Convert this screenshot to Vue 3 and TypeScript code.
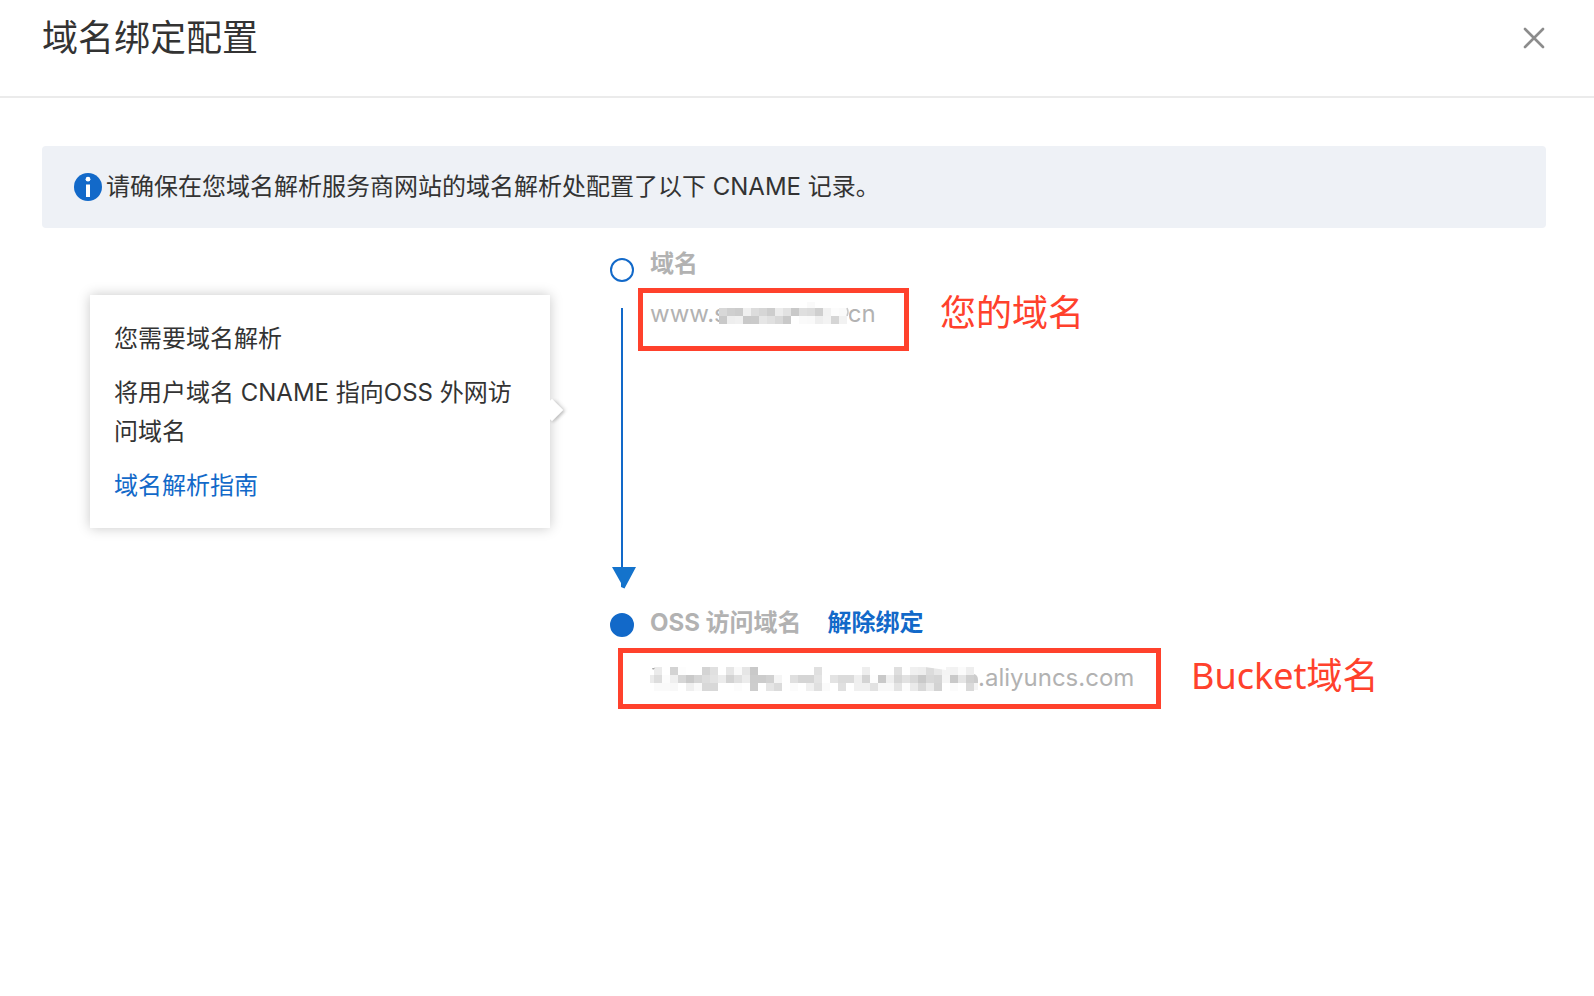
<script setup lang="ts">
interface Cell {
  x: number
  y: number
  fill: string
}

const CELL = 8

// Each row is a list of two-digit hex grey levels, one per mosaic cell.
function toCells(rows: string[]): Cell[] {
  return rows.flatMap((row, r) =>
    row.split(' ').map((grey, c) => ({
      x: c * CELL,
      y: r * CELL,
      fill: `#${grey}${grey}${grey}`,
    })),
  )
}

const userMask = toCells([
  'd8 cf cc f0 dc d6 cd ec e2 c9 df dc cf f2 fc fa',
  'c9 ee f0 c9 ca e6 e0 d8 c9 ff fa f9 ee f3 d5 f2',
])

const bucketMask = toCells([
  'eb ff d3 fd ff ff d4 e0 ff e6 fa e6 c9 ff ff ff ff ff ff ff e0 ff ff ff ff ff ee ff ff ff df ff f0 ee dc e8 f4 f2 fb ee',
  'dd fc ef d6 c9 d5 dd e3 ec d3 e0 ec cc cc d1 f5 ff df d5 d5 e4 ff e3 db db ef d4 fd c9 ef d6 e2 d8 c9 d8 d5 f5 c9 e5 d0',
  'fa fa f8 ff ef f9 d8 d8 ff ff fc ff cd ff e5 db ff fb ff f0 e0 fb ff e0 ff f0 f0 e2 f8 f8 e4 fc ea d8 eb d3 ff fb ff da',
])
</script>

<template>
  <section class="dialog" aria-labelledby="dialog-title">
    <header class="dialog-header">
      <h1 id="dialog-title">域名绑定配置</h1>
      <button type="button" class="close" aria-label="关闭">
        <svg width="24" height="24" viewBox="0 0 24 24" aria-hidden="true">
          <path d="M3 3L21 21M21 3L3 21" fill="none" stroke="#8c8c8c" stroke-width="2.6" stroke-linecap="round" />
        </svg>
      </button>
    </header>

    <main class="dialog-body">
      <div class="notice" role="note">
        <svg width="28" height="28" viewBox="0 0 28 28" aria-hidden="true">
          <circle cx="14" cy="14" r="14" fill="#1269c9" />
          <circle cx="14" cy="6.2" r="2.4" fill="#fff" />
          <rect x="12" y="11.5" width="4" height="12.5" fill="#fff" />
        </svg>
        <span>请确保在您域名解析服务商网站的域名解析处配置了以下 CNAME 记录。</span>
      </div>

      <div class="binding">
        <aside class="guide">
          <p>您需要域名解析</p>
          <p>将用户域名 CNAME 指向OSS 外网访问域名</p>
          <p><a href="#">域名解析指南</a></p>
        </aside>

        <div class="track" aria-hidden="true">
          <span class="node"></span>
          <div class="connector">
            <svg width="24" height="22" viewBox="0 0 24 22">
              <path d="M0 0H24L12.5 21.5L9 20V16Z" fill="#1473cc" />
            </svg>
          </div>
          <span class="node filled"></span>
        </div>

        <div class="steps">
          <section class="step first">
            <h2>域名</h2>
            <div class="row">
              <div class="value user">
                <span>www.s</span>
                <svg class="mask" width="132" height="24" viewBox="0 0 132 24" aria-hidden="true">
                  <rect width="130" height="24" fill="#fff" />
                  <rect x="88" y="0" width="8" height="6" fill="#fafafa" />
                  <g transform="translate(0 6)">
                    <rect v-for="(c, i) in userMask" :key="i" :x="c.x" :y="c.y" width="8" height="8" :fill="c.fill" />
                  </g>
                  <path d="M128 6Q130 10 128 14" fill="none" stroke="#c8c8c8" stroke-width="1.5" />
                </svg>
                <span>cn</span>
              </div>
              <span class="note raised">您的域名</span>
            </div>
          </section>

          <section class="step">
            <div class="heading">
              <h2>OSS 访问域名</h2>
              <button type="button" class="unbind">解除绑定</button>
            </div>
            <div class="row">
              <div class="value bucket">
                <svg class="mask" width="328" height="24" viewBox="0 0 328 24" aria-hidden="true">
                  <rect x="0" y="8" width="4" height="8" fill="#ebebeb" />
                  <g transform="translate(4 0)">
                    <rect v-for="(c, i) in bucketMask" :key="i" :x="c.x" :y="c.y" width="8" height="8" :fill="c.fill" />
                  </g>
                  <path d="M2 1H5L3 3Z" fill="#a8a8a8" />
                  <path d="M275 0L296 3V0Z" fill="#fff" />
                  <path d="M324 7Q328 8 328 13V16H324Z" fill="#cccccc" />
                  <rect x="324" y="16" width="4" height="7" fill="#f4f4f4" />
                </svg>
                <span>.aliyuncs.com</span>
              </div>
              <span class="note">Bucket域名</span>
            </div>
          </section>
        </div>
      </div>
    </main>
  </section>
</template>

<style>
body {
  margin: 0;
  background: #fff;
}
</style>

<style scoped>
.dialog {
  min-height: 100vh;
  background: #fff;
  color: #333;
  font-family: Inter, "Noto Sans CJK SC", sans-serif;
  font-size: 24px;
  line-height: 39px;
}

.dialog-header {
  display: flex;
  align-items: flex-start;
  justify-content: space-between;
  box-sizing: border-box;
  min-height: 98px;
  padding: 12px 48px 0 42px;
  border-bottom: 2px solid #ebebeb;
}

h1 {
  margin: 0;
  font-size: 36px;
  font-weight: 400;
  line-height: 52px;
}

.close {
  display: flex;
  margin: 14px 0 0;
  padding: 0;
  border: 0;
  background: none;
  cursor: pointer;
}

.dialog-body {
  padding: 48px 48px 48px 42px;
}

.notice {
  display: flex;
  align-items: center;
  gap: 4px;
  box-sizing: border-box;
  min-height: 82px;
  padding: 20px 32px;
  border-radius: 4px;
  background: #eef1f6;
}

.notice span {
  padding-bottom: 2px;
}

.binding {
  display: flex;
  align-items: flex-start;
}

.guide {
  position: relative;
  display: flex;
  flex: none;
  flex-direction: column;
  gap: 15px;
  box-sizing: border-box;
  width: 460px;
  margin: 67px 60px 0 48px;
  padding: 24px 24px 23px;
  background: #fff;
  box-shadow: 0 0 12px rgba(0, 0, 0, 0.22);
}

.guide::before {
  content: "";
  position: absolute;
  top: 107px;
  right: -10px;
  width: 16px;
  height: 16px;
  background: #fff;
  box-shadow: 3px -3px 4px -1px rgba(0, 0, 0, 0.1), 2px 0 3px rgba(0, 0, 0, 0.16);
  transform: rotate(45deg);
}

.guide::after {
  content: "";
  position: absolute;
  inset: 0;
  z-index: 0;
  background: #fff;
}

.guide p {
  position: relative;
  z-index: 1;
  margin: 0;
}

a {
  color: #1269c9;
  text-decoration: none;
}

.track {
  display: flex;
  flex: none;
  flex-direction: column;
  align-items: center;
  align-self: flex-start;
  width: 24px;
  padding-top: 30px;
}

.node {
  box-sizing: border-box;
  width: 24px;
  height: 24px;
  border: 2px solid #1269c9;
  border-radius: 50%;
}

.node.filled {
  background: #1269c9;
}

.connector {
  display: flex;
  align-items: flex-end;
  height: 281px;
  margin: 26px 0 24px;
  background: linear-gradient(#1269c9, #1269c9) 11px 0 / 2px 279px no-repeat;
}

.connector svg {
  margin-right: -2px;
  margin-left: 2px;
}

.steps {
  flex: 1;
  padding: 16px 0 0 16px;
}

.step.first {
  min-height: 359px;
}

h2 {
  margin: 0;
  color: #b2b2b2;
  font-size: 24px;
  font-weight: 700;
  line-height: 39px;
}

.heading {
  display: flex;
  gap: 26px;
}

.unbind {
  padding: 0;
  border: 0;
  background: none;
  color: #1269c9;
  font: inherit;
  font-weight: 700;
  cursor: pointer;
}

.row {
  display: flex;
  align-items: center;
}

.value {
  display: flex;
  align-items: center;
  box-sizing: border-box;
  border: 5px solid #ff412c;
  color: #b2b2b2;
}

.value.user {
  width: 271px;
  height: 63px;
  margin: 5px 31px 0 -12px;
  padding: 0 7px 12px;
}

.value.user .mask {
  margin: 0 -3px 0 -8px;
}

.value.bucket {
  width: 543px;
  height: 61px;
  margin: 6px 30px 0 -32px;
  padding: 0 27px;
}

.value.bucket span {
  padding-bottom: 2px;
}

.mask {
  position: relative;
  flex: none;
}

.note {
  color: #ff412c;
  font-family: "Noto Sans", "Noto Sans CJK SC", sans-serif;
  font-size: 36px;
  line-height: 48px;
}

.note.raised {
  padding-bottom: 8px;
}
</style>
